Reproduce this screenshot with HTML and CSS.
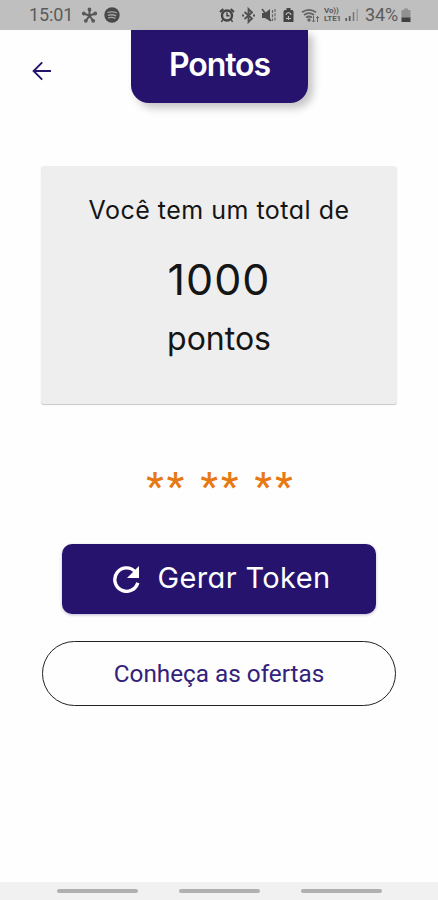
FILE: index.html
```html
<!DOCTYPE html>
<html lang="pt-BR">
<head>
<meta charset="utf-8">
<title>Pontos</title>
<link rel="stylesheet" href="styles.css">
</head>
<body>
<div class="status">
  <span class="time">15:01</span>
  <svg class="flower" width="17" height="17" viewBox="0 0 17 17" fill="none" stroke="#565656" stroke-width="2" stroke-linecap="round"><path d="M8.5 8.5V2.5M8.5 8.5L3 6.7M8.5 8.5L14 6.7M8.5 8.5L5 13.7M8.5 8.5L12 13.7"/><g stroke-width="1.2"><circle cx="8.5" cy="2.5" r="1.3"/><circle cx="2.8" cy="6.5" r="1.3"/><circle cx="14.2" cy="6.5" r="1.3"/><circle cx="4.8" cy="13.8" r="1.3"/><circle cx="12.2" cy="13.8" r="1.3"/></g></svg>
  <svg class="disc" width="16" height="16" viewBox="0 0 16 16"><circle cx="8" cy="8" r="7.7" fill="#484848"/><path d="M3.4 5.5Q8.5 4 13 6M3.8 8.3Q8.5 7 12.2 8.9M4.2 10.8Q8.5 9.8 11.4 11.4" fill="none" stroke="#a4a4a4" stroke-width="1.3"/></svg>
  <span class="grow"></span>
  <svg class="alarm" width="16" height="16" viewBox="0 0 16 16" fill="none" stroke="#444"><circle cx="8" cy="8.5" r="5" stroke-width="2.4"/><path d="M8 5.5V8.8H10.5M3.8 12.5L2.5 15M12.2 12.5L13.5 15" stroke-width="1.5"/><path d="M1 5L4.3 2M15 5L11.7 2" stroke-width="2"/></svg>
  <svg class="bt" width="13" height="17" viewBox="0 0 13 17" fill="none" stroke="#505050" stroke-width="1.8"><path d="M2.5 5L10 11.5L6.5 15V2L10 5.5L2.5 12"/><path d="M0 8.5H2M11 8.5H13" stroke-width="2"/></svg>
  <svg class="mute" width="15" height="16" viewBox="0 0 15 16"><path d="M1 6H4L9 2V14L4 11H1Z" fill="#4c4c4c"/><path d="M1 2L10 14" stroke="#4c4c4c" stroke-width="1.5"/><path d="M11.5 3V14M14 2V14" stroke="#666" stroke-width="1.2" stroke-dasharray="3 1.3"/></svg>
  <svg class="saver" width="11" height="16" viewBox="0 0 11 16"><path d="M3.5 1H7.5V3H9.5L10.5 4.5V15H.5V4.5L1.5 3H3.5Z" fill="#444"/><path d="M3.2 8V7.2Q5.5 4 7.8 7.2V8M3 11.5H8M5.5 9V13" stroke="#bbb" fill="none" stroke-width="1.2"/></svg>
  <svg class="wifi" width="19" height="17" viewBox="0 0 19 17" fill="none" stroke="#626262" stroke-width="1.7"><path d="M1 5.2Q8 .5 15 5.2M3 8Q8 4.2 13 8M5 10.7Q8 8.3 11 10.7"/><circle cx="8" cy="13" r=".8"/><path d="M12.5 9V15M11 13.5L12.5 15L14 13.5M16.5 15V9.5M15 11L16.5 9.5L18 11" stroke-width="1"/></svg>
  <span class="lte"><span>Vo))</span><span>LTE1</span></span>
  <svg class="signal" width="14" height="14" viewBox="0 0 14 14"><path d="M1.2 10V13M4.7 8V13" stroke="#606060" stroke-width="1.8"/><path d="M8.5 4V13" stroke="#777" stroke-width="1.6"/><path d="M12.3 1V13" stroke="#999" stroke-width="1.4"/></svg>
  <span class="percent">34%</span>
  <svg class="battery" width="10" height="15" viewBox="0 0 10 15"><path d="M3 .5H7V2H9.5V10H.5V2H3Z" fill="#919191"/><path d="M.5 9.5H9.5V14H.5Z" fill="#404040"/></svg>
</div>
<header class="header">
  <svg class="back" width="20" height="20" viewBox="0 0 20 20" fill="none" stroke="#26136e" stroke-width="1.9"><path d="M19 10H2M10.2 1.3L1.6 10L10.2 18.7"/></svg>
  <h1 class="title"><span>Pontos</span></h1>
</header>
<main>
  <section class="card">
    <div class="lead">Você tem um total de</div>
    <div class="value">1000</div>
    <div class="unit">pontos</div>
  </section>
  <div class="token">** ** **</div>
  <button class="generate">
    <svg width="28" height="28" viewBox="0 0 28 28"><path d="M23.4 7A11.7 11.7 0 1 0 25.8 17.7" fill="none" stroke="#fff" stroke-width="3.4"/><path d="M27 1V13H15Z" fill="#fff"/></svg>
    <span>Gerar Token</span>
  </button>
  <button class="offers"><span>Conheça as ofertas</span></button>
</main>
<nav class="nav"><i></i><i></i><i></i></nav>
</body>
</html>
```

FILE: styles.css
```css
* { box-sizing: border-box; }
body { margin: 0; height: 900px; display: flex; flex-direction: column; overflow: hidden; background: #fefefe; font-family: Inter, "Liberation Sans", sans-serif; font-feature-settings: "cv11"; color: #151515; }
svg { display: block; flex: none; }
.status { height: 30px; flex: none; background: #bfbfbf; display: flex; align-items: center; padding: 0 27px 0 29px; font-family: Roboto, sans-serif; color: #5b5b5b; font-size: 18px; line-height: 30px; }
.time { width: 45px; letter-spacing: -.1px; }
.flower { margin-left: 7px; }
.disc { margin-left: 6px; }
.grow { flex: 1; }
.alarm { margin-right: 1px; }
.bt { margin-left: 6px; }
.mute { margin-left: 6px; }
.saver { margin-left: 7px; }
.wifi { margin-left: 7px; }
.lte { width: 19px; margin-left: 4px; display: flex; flex-direction: column; font-size: 8px; line-height: 8px; font-weight: 700; letter-spacing: -.1px; }
.signal { margin-left: 2px; }
.percent { width: 34px; margin-left: 6px; letter-spacing: -.1px; }
.battery { margin-left: 2px; }
.header { height: 136px; flex: none; display: grid; grid-template-columns: 131px 177px 1fr; align-items: start; }
.back { margin: 31px 0 0 32px; }
.title { margin: 0; height: 73px; background: #26136e; border-radius: 0 0 18px 18px; box-shadow: 5px 5px 9px rgba(0,0,0,.23); color: #fff; font-size: 32px; font-weight: 600; line-height: 69px; letter-spacing: -1.1px; text-align: center; }
main { flex: 1; display: flex; flex-direction: column; align-items: center; }
.card { width: 356px; height: 238px; border-radius: 3px; background: #eee; box-shadow: 0 1px 1px rgba(0,0,0,.22); text-align: center; padding-top: 24px; white-space: nowrap; }
.lead { font-size: 25px; line-height: 40px; letter-spacing: .5px; }
.value { font-size: 43px; line-height: 60px; margin-top: 19px; letter-spacing: 1px; }
.unit { font-size: 32px; line-height: 40px; margin-top: 10px; }
.token { height: 50px; margin-top: 58px; font: 500 39px/50px Roboto, sans-serif; color: #e67913; letter-spacing: 3.3px; padding-left: 4px; white-space: pre; }
button { padding: 0; flex: none; display: flex; align-items: center; justify-content: center; }
.generate { width: 314px; height: 70px; margin-top: 32px; border: 0; border-radius: 10px; background: #26136e; box-shadow: 0 1px 3px rgba(38,19,110,.3); color: #fff; font: 400 29px/60px Inter, sans-serif; font-feature-settings: "cv11"; letter-spacing: .35px; gap: 18px; padding-left: 4px; }
.generate span { margin-top: -3px; white-space: nowrap; }
.offers { width: 354px; height: 65px; margin-top: 27px; border: 1.5px solid #222; border-radius: 33px; background: #fefefe; color: #33217a; font: 400 24.3px/40px Roboto, sans-serif; }
.nav { height: 18px; flex: none; background: #f1f1f1; display: flex; justify-content: center; gap: 41px; padding-top: 7px; }
.nav i { width: 81px; height: 4px; border-radius: 2px; background: #b0b0b0; }
```
